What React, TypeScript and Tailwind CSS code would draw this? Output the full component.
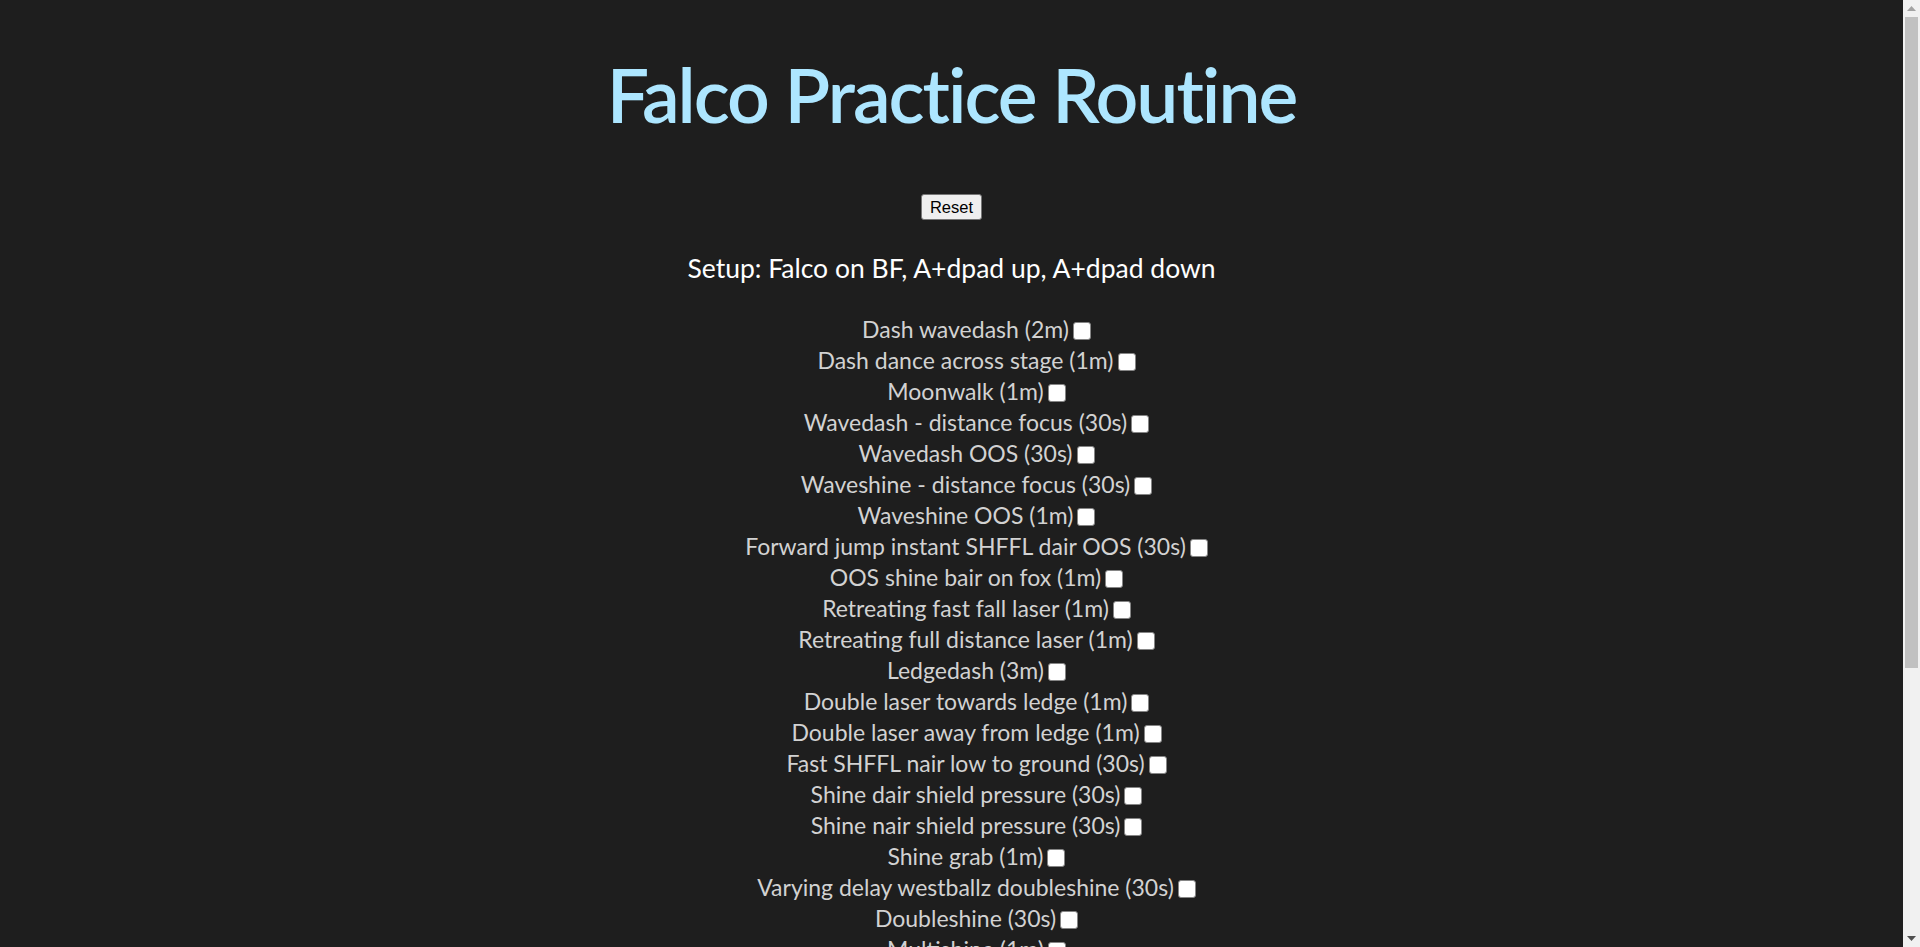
import React from "react";

const items = [
  "Dash wavedash (2m)",
  "Dash dance across stage (1m)",
  "Moonwalk (1m)",
  "Wavedash - distance focus (30s)",
  "Wavedash OOS (30s)",
  "Waveshine - distance focus (30s)",
  "Waveshine OOS (1m)",
  "Forward jump instant SHFFL dair OOS (30s)",
  "OOS shine bair on fox (1m)",
  "Retreating fast fall laser (1m)",
  "Retreating full distance laser (1m)",
  "Ledgedash (3m)",
  "Double laser towards ledge (1m)",
  "Double laser away from ledge (1m)",
  "Fast SHFFL nair low to ground (30s)",
  "Shine dair shield pressure (30s)",
  "Shine nair shield pressure (30s)",
  "Shine grab (1m)",
  "Varying delay westballz doubleshine (30s)",
  "Doubleshine (30s)",
  "Multishine (1m)",
  "Shine turnaround (30s)",
  "Platform drop laser (1m)",
  "Shield drop (1m)",
  "Ledge drop bair (1m)",
  "Ledge hop laser (1m)",
  "Pillar combos on fox (3m)",
  "Down throw chaingrab on fox (1m)",
  "Up throw up air (1m)",
  "Firebird sweetspot (1m)",
  "Phantasm to ledge (1m)",
  "Recovery mixups (2m)",
];

function Scrollbar() {
  return (
    <aside className="sticky top-0 h-screen w-[17px] shrink-0 bg-[#f1f1f1] flex flex-col items-center">
      <div className="h-[17px] w-full flex items-center justify-center">
        <svg width="9" height="5" viewBox="0 0 9 5">
          <path d="M0 5 L4.5 0 L9 5 Z" fill="#a3a3a3" />
        </svg>
      </div>
      <div className="w-[13px] h-[651px] bg-[#c1c1c1]" />
      <div className="flex-1" />
      <div className="h-[17px] w-full flex items-center justify-center">
        <svg width="9" height="5" viewBox="0 0 9 5">
          <path d="M0 0 L9 0 L4.5 5 Z" fill="#505050" />
        </svg>
      </div>
    </aside>
  );
}

export default function App() {
  return (
    <div className="flex bg-[#1e1e1e] min-h-screen">
      <main className="flex-1 text-center pb-[30px] font-['Lato','Noto_Sans',sans-serif]">
        <h1 className="pt-[54px] text-[75px] leading-[80px] font-semibold text-[#ade6ff] tracking-[-2px]">
          Falco Practice Routine
        </h1>
        <div className="mt-[60px] flex justify-center">
          <button className="h-[26px] w-[61px] border border-[#767676] bg-[#efefef] rounded-[3px] text-black text-[16.5px] leading-[20px] font-['Liberation_Sans',Arial,sans-serif]">
            Reset
          </button>
        </div>
        <div className="mt-[32px] text-white text-[26.5px] leading-[32px]">
          Setup: Falco on BF, A+dpad up, A+dpad down
        </div>
        <ul className="mt-[30px] pl-[50px] flex flex-col items-center">
          {items.map((t) => (
            <li
              key={t}
              className="text-[#d2d2d2] text-[23px] leading-[31px] h-[31px] whitespace-nowrap"
            >
              {t}
              <span className="inline-block ml-[4px] w-[18px] h-[18px] bg-white border border-[#858585] rounded-[3px] align-[-2px]" />
            </li>
          ))}
        </ul>
      </main>
      <Scrollbar />
    </div>
  );
}
